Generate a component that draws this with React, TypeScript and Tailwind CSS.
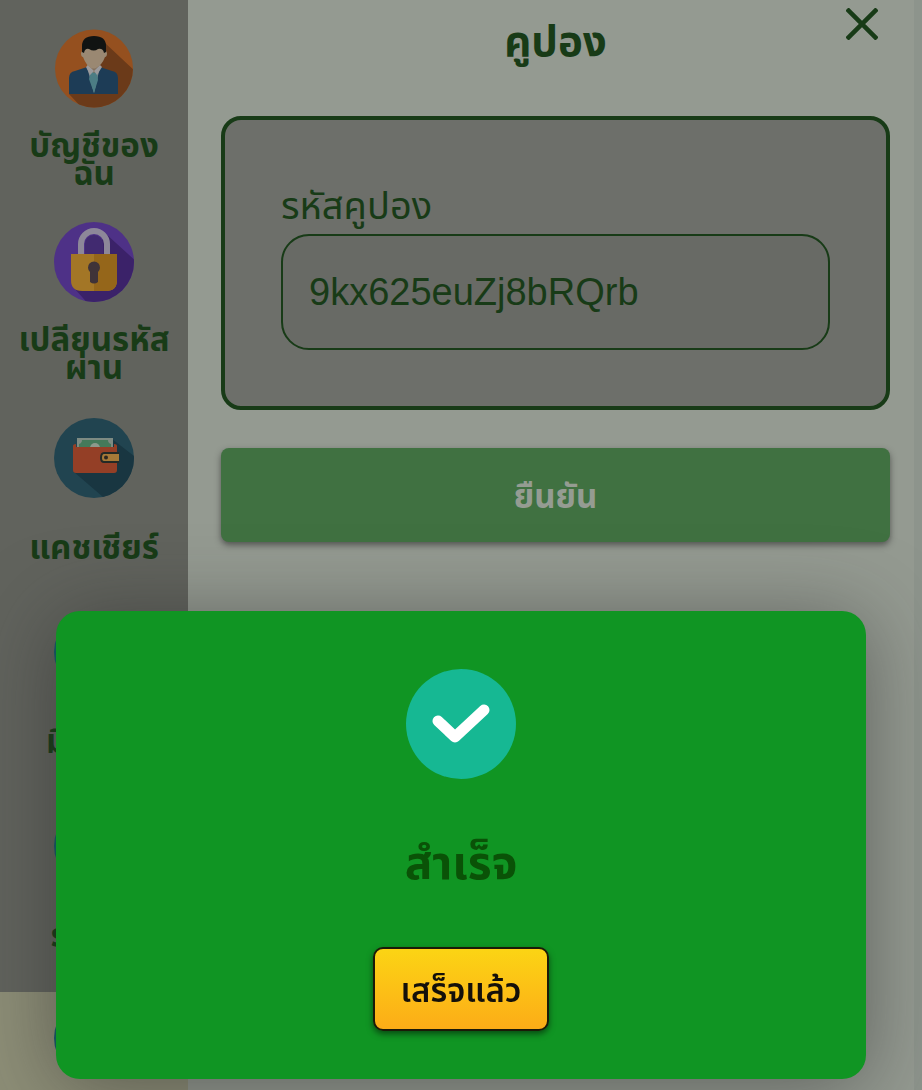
import React, { useState } from 'react';

interface MenuItem {
  id: string;
  name: string;
  lines: string[];
  icon: React.ReactNode;
}

function AccountIcon() {
  return (
    <svg viewBox="0 0 80 80" className="size-20" aria-hidden="true">
      <defs>
        <clipPath id="account-clip">
          <circle cx="40" cy="40.500" r="39" />
        </clipPath>
      </defs>
      <circle cx="40" cy="40.500" r="39" fill="#95501f" />
      <path d="M51 15 L82 44 V82 H30 L15 66 L40 50 Z" fill="#6b3a19" clipPath="url(#account-clip)" />
      <path d="M15 66 V50 Q15 44 21 43 L33 39 H46 L58 43 Q64 44 64 50 V66 Z" fill="#1d3c56" />
      <path d="M33 39 H46 L40 65 Z" fill="#858b91" />
      <path d="M37 43 H43 L44 52 L40 65 L35 51 Z" fill="#4c7d84" />
      <path d="M33 36 H46 V40 L40 45 L33 40 Z" fill="#84705d" />
      <path d="M32 39 L34 37 L40 43 L36 47 Z M48 39 L46 37 L40 43 L43 47 Z" fill="#9b9a9c" />
      <path d="M27 25 Q28 22 30 20 H50 Q52 22 53 25 Q53 29 51 29 Q48 37 42 40 Q40 41 37 40 Q32 37 29 29 Q27 29 27 25 Z" fill="#9a8872" />
      <path d="M28 24 V18 Q28 8 40 8 Q52 8 52 18 V24 L50 25 Q49 20 44 21 Q40 24 35 21 Q31 20 30 25 Z" fill="#111312" />
    </svg>
  );
}

function LockIcon() {
  return (
    <svg viewBox="0 0 80 80" className="size-20" aria-hidden="true">
      <defs>
        <clipPath id="lock-clip">
          <circle cx="40" cy="40" r="40" />
        </clipPath>
      </defs>
      <circle cx="40" cy="40" r="40" fill="#4e3187" />
      <path d="M51 11 L85 42 V85 H37 L20 66 L40 40 Z" fill="#3b2269" clipPath="url(#lock-clip)" />
      <path d="M31 33 V22 A9 9 0 0 1 49 22 V33 Z" fill="#412a70" />
      <path d="M27 33 V22 A13 13 0 0 1 53 22 V33" fill="none" stroke="#8d8799" strokeWidth="6" />
      <path d="M17 32 H63 V58 Q63 69 52 69 H28 Q17 69 17 58 Z" fill="#a37626" />
      <path d="M40 32 H63 V58 Q63 69 52 69 H40 Z" fill="#95661a" />
      <path d="M36 50 A6 6 0 1 1 44 50 V60 Q40 63 36 60 Z" fill="#3f3338" />
    </svg>
  );
}

function WalletIcon() {
  return (
    <svg viewBox="0 0 80 80" className="size-20" aria-hidden="true">
      <defs>
        <clipPath id="wallet-clip">
          <circle cx="40" cy="40" r="40" />
        </clipPath>
      </defs>
      <circle cx="40" cy="40" r="40" fill="#214450" />
      <path d="M58 21 L85 42 V85 H56 L20 54 Z" fill="#193641" clipPath="url(#wallet-clip)" />
      <rect x="23" y="20" width="36" height="14" fill="#7e8b83" />
      <path d="M28 22 H54 Q54 25 57 26 V34 H25 V26 Q28 25 28 22 Z" fill="#447a5a" />
      <circle cx="41" cy="30" r="5" fill="#8c9a8c" />
      <path d="M19 28 Q19 26 22 26 V29 H60 V26 Q63 26 63 28 V52 Q63 55 60 55 H22 Q19 55 19 52 Z" fill="#943f26" />
      <path d="M65 34 H50 Q46 34 46 40 Q46 45 50 45 H65" fill="#232a26" />
      <path d="M65 36 H50 Q48 36 48 40 Q48 43 50 43 H65 Z" fill="#a67a38" />
      <circle cx="52" cy="39.500" r="2" fill="#2c2720" />
    </svg>
  );
}

function DotIcon() {
  return (
    <svg viewBox="0 0 80 80" className="size-20" aria-hidden="true">
      <circle cx="40" cy="40" r="40" fill="#115b69" />
    </svg>
  );
}

const menuItems: MenuItem[] = [
  { id: 'account', name: 'บัญชีของฉัน', lines: ['บัญชีของ', 'ฉัน'], icon: <AccountIcon /> },
  { id: 'password', name: 'เปลียนรหัสผ่าน', lines: ['เปลียนรหัส', 'ผ่าน'], icon: <LockIcon /> },
  { id: 'cashier', name: 'แคชเชียร์', lines: ['แคชเชียร์'], icon: <WalletIcon /> },
  { id: 'games', name: 'มินิเกม', lines: ['มินิเกม'], icon: <DotIcon /> },
  { id: 'rewards', name: 'รางวัล', lines: ['รางวัล'], icon: <DotIcon /> },
  { id: 'coupon', name: 'คูปอง', lines: [], icon: <DotIcon /> },
];

function Sidebar({ activeId }: { activeId: string }) {
  return (
    <nav className="w-47 shrink-0 bg-[#61635d] pt-5.5">
      {menuItems.map((item) => (
        <a
          key={item.id}
          href={`#${item.id}`}
          aria-label={item.name}
          className={
            item.id === activeId
              ? 'flex h-48.5 flex-col items-center bg-[#8d8e77]'
              : 'flex h-48.5 flex-col items-center'
          }
        >
          <span className={item.lines.length === 1 ? 'pt-2 pb-5.5' : 'pt-1.5 pb-6'}>{item.icon}</span>
          <span className="flex h-14 flex-col justify-center text-center text-[33px] leading-7 font-bold whitespace-nowrap">
            {item.lines.map((line) => (
              <span key={line}>{line}</span>
            ))}
          </span>
        </a>
      ))}
    </nav>
  );
}

function SuccessDialog({ onClose }: { onClose: () => void }) {
  return (
    <div className="fixed inset-0 flex items-end px-14 pb-[11px]">
      <div
        role="dialog"
        aria-labelledby="dialog-title"
        className="flex w-full flex-col items-center rounded-3xl bg-[#109523] pt-[58px] pb-12 shadow-[0_8px_80px_rgba(40,40,40,0.5)]"
      >
        <svg viewBox="0 0 110 110" className="size-[110px]" aria-hidden="true">
          <circle cx="55" cy="55" r="55" fill="#16b893" />
          <path
            d="M32 52 L49 68 L78 41"
            fill="none"
            stroke="#ffffff"
            strokeWidth="11"
            strokeLinecap="round"
            strokeLinejoin="round"
          />
        </svg>
        <h2 id="dialog-title" className="mt-14 text-[46px] leading-14 font-bold text-[#0a5207]">
          สำเร็จ
        </h2>
        <button
          type="button"
          onClick={onClose}
          className="mt-14 h-21 w-44 rounded-[10px] border-2 border-[#1b1a08] bg-linear-to-b from-[#fbd414] to-[#fcac17] pt-1 text-[33px] font-semibold whitespace-nowrap text-[#14100a] shadow-[0_3px_6px_rgba(0,0,0,0.5)]"
        >
          เสร็จแล้ว
        </button>
      </div>
    </div>
  );
}

export default function App() {
  const [code, setCode] = useState('9kx625euZj8bRQrb');
  const [showDialog, setShowDialog] = useState(true);

  const handleSubmit = (e: React.FormEvent) => {
    e.preventDefault();
    setShowDialog(true);
  };

  return (
    <div className="flex h-screen overflow-hidden bg-[#949a91] font-['Liberation_Sans','Noto_Sans_Thai','Noto_Sans',sans-serif] text-[#183b17]">
      <Sidebar activeId="coupon" />

      <main className="min-w-0 flex-1 border-r-8 border-[#8d948c] pr-6 pl-[33px]">
        {/* Header */}
        <header className="grid h-29 grid-cols-[1fr_auto_1fr] items-start">
          <h1 className="col-start-2 pt-3.5 text-[42px] leading-14 font-bold">คูปอง</h1>
          <button type="button" aria-label="ปิด" className="mt-2 mr-3 justify-self-end">
            <svg viewBox="0 0 32 32" className="size-8" fill="none" stroke="currentColor" strokeWidth="4.500">
              <path d="M1 1 L31 31 M31 1 L1 31" />
            </svg>
          </button>
        </header>

        {/* Coupon form */}
        <form onSubmit={handleSubmit}>
          <div className="rounded-[20px] border-4 border-[#183b17] bg-[#6d6f6a] px-14 pt-[58px] pb-14">
            <label htmlFor="coupon-code" className="block text-[38px] leading-14">
              รหัสคูปอง
            </label>
            <input
              id="coupon-code"
              type="text"
              value={code}
              onChange={(e) => setCode(e.target.value)}
              className="block h-29 w-full rounded-[28px] border-2 border-[#183b17] bg-[#686a65] px-6.5 text-[38px] outline-none"
            />
          </div>
          <button
            type="submit"
            className="mt-[38px] h-[94px] w-full rounded-lg bg-[#407141] pt-1 text-[33px] font-bold text-[#959c92] shadow-[0_3px_6px_rgba(40,40,40,0.6)]"
          >
            ยืนยัน
          </button>
        </form>
      </main>

      {showDialog && <SuccessDialog onClose={() => setShowDialog(false)} />}
    </div>
  );
}
